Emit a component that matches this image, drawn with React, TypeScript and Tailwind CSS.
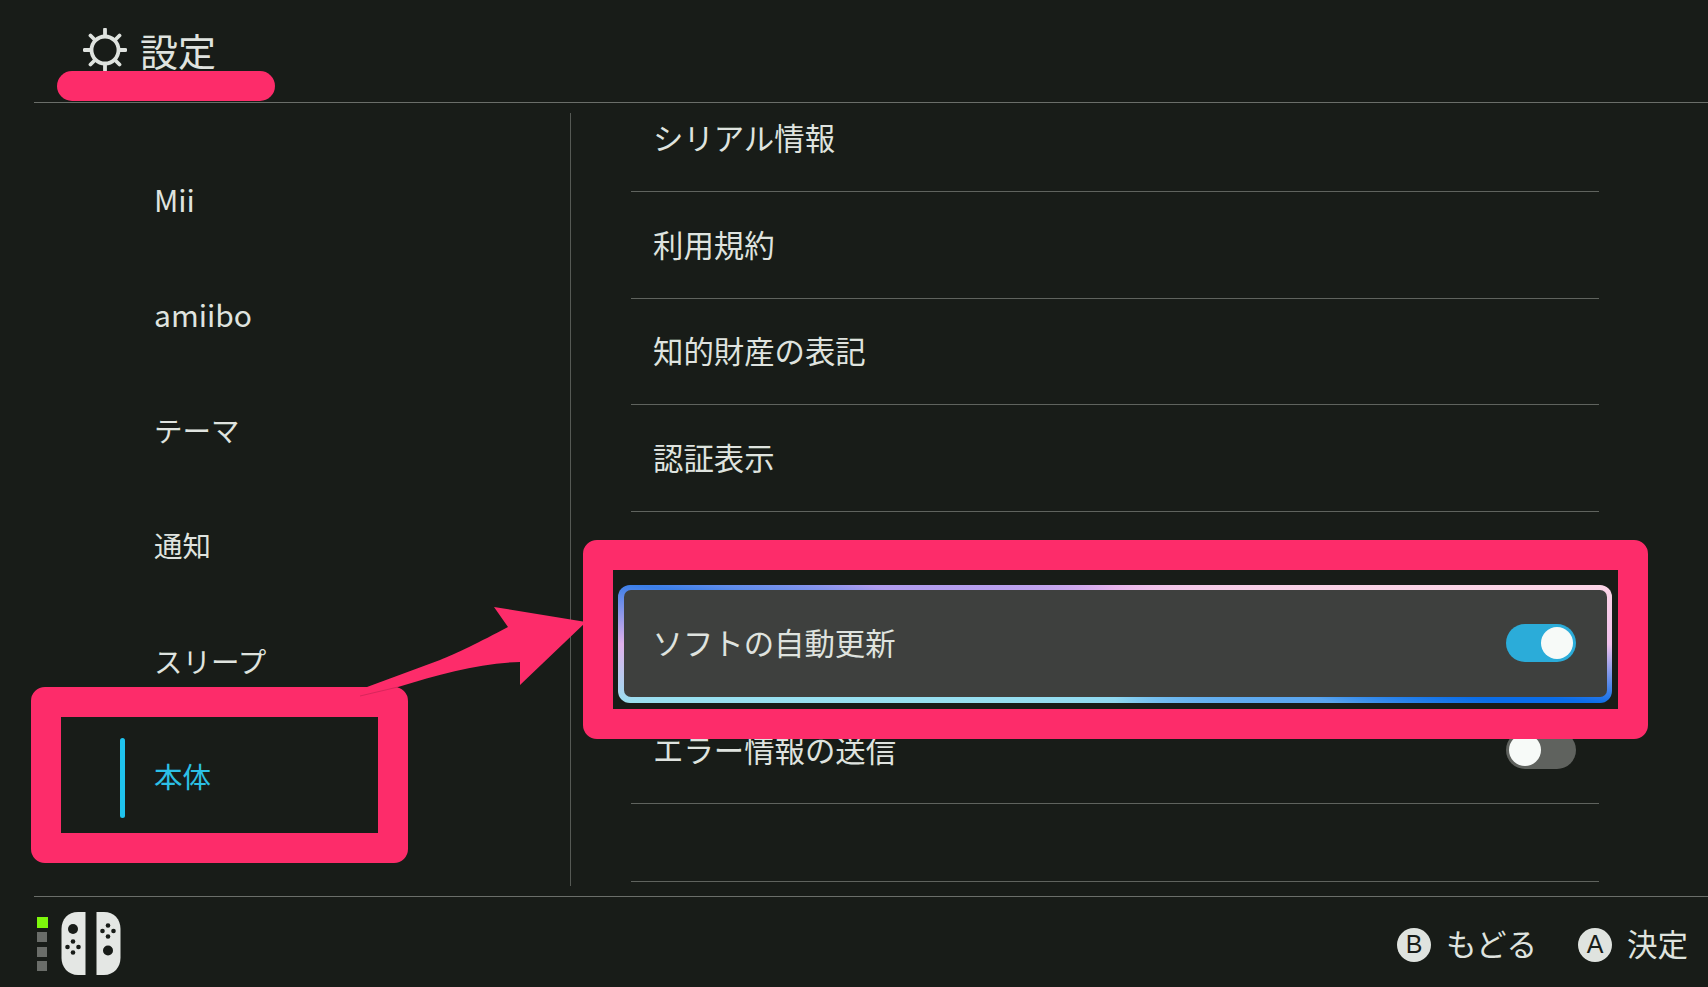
import React from 'react';

const sideItems = ['Mii', 'amiibo', 'テーマ', '通知', 'スリープ', '本体'];
const topRows = ['利用規約', '知的財産の表記', '認証表示'];

const Gear = () => (
  <svg width="44" height="44" viewBox="0 0 44 44" fill="none" stroke="#dfe3df" strokeWidth="3.800" strokeLinecap="round">
    <circle cx="22" cy="22" r="13.500" />
    <path d="M22 1.500V8M22 36V42.500M1.500 22H8M36 22H42.500M7.500 7.500L12 12M32 32L36.500 36.500M36.500 7.500L32 12M12 32L7.500 36.500" />
  </svg>
);

const JoyCons = () => (
  <svg width="60" height="64" viewBox="0 0 60 64">
    <path d="M24.500 0V63H17C7 63 0.500 55 0.500 46V17C0.500 7 7 0 17 0Z" fill="#e4e7e4" />
    <path d="M35.500 0V63H43C53 63 59.500 55 59.500 46V17C59.500 7 53 0 43 0Z" fill="#e4e7e4" />
    <g fill="#181c18">
      <circle cx="12" cy="17" r="5" />
      <circle cx="12" cy="29.500" r="2.300" />
      <circle cx="12" cy="40.500" r="2.300" />
      <circle cx="6.500" cy="35" r="2.300" />
      <circle cx="17.500" cy="35" r="2.300" />
      <circle cx="47" cy="38.500" r="5" />
      <circle cx="47" cy="13.500" r="2.300" />
      <circle cx="47" cy="24.500" r="2.300" />
      <circle cx="41.500" cy="19" r="2.300" />
      <circle cx="52.500" cy="19" r="2.300" />
    </g>
  </svg>
);

const Toggle = ({ on }: { on: boolean }) => (
  <div className={`flex h-[38px] w-[70px] items-center rounded-full px-[3px] ${on ? 'justify-end bg-[#2bacd9]' : 'justify-start bg-[#5f625e]'}`}>
    <div className="h-[32px] w-[32px] rounded-full bg-[#f7faf8]" />
  </div>
);

const ButtonHint = ({ letter, label }: { letter: string; label: string }) => (
  <div className="flex items-center gap-[15px]">
    <div className="flex h-[34px] w-[34px] items-center justify-center rounded-full bg-[#dfe3df] font-['Liberation_Sans',sans-serif] text-[25px] leading-none text-[#181c18]">
      {letter}
    </div>
    <span className="pb-[3px] text-[30.500px] leading-none">{label}</span>
  </div>
);

export default function App() {
  return (
    <div className="relative flex h-[987px] w-[1708px] flex-col overflow-hidden bg-[#181c18] font-['Noto_Sans_CJK_JP','Noto_Sans',sans-serif] text-[#dfe3df]">
      {/* header */}
      <header className="ml-[34px] flex h-[103px] shrink-0 items-center gap-[13px] border-b border-[#6a6e69] pb-[2px] pl-[49px]">
        <Gear />
        <h1 className="text-[38px] leading-none font-normal">設定</h1>
      </header>

      <main className="flex min-h-0 flex-1">
        {/* left menu */}
        <nav className="my-[10px] ml-[34px] w-[537px] shrink-0 border-r border-[#555954] pt-[30px]">
          {sideItems.map((item) => {
            const active = item === '本体';
            const latin = item === 'Mii' || item === 'amiibo';
            return (
              <div key={item} className="flex h-[115.400px] items-center pl-[86px]">
                <div className={`mr-[29px] h-[80px] w-[5px] rounded-sm ${active ? 'bg-[#1fc3ee]' : ''}`} />
                <span className={`leading-none ${latin ? 'pb-[4px] text-[30px]' : 'pb-[3px] text-[28.500px]'} ${active ? 'text-[#2cc0e6]' : ''}`}>{item}</span>
              </div>
            );
          })}
        </nav>

        {/* right list */}
        <section className="min-w-0 flex-1 pr-[109px] pl-[60px]">
          <div className="flex h-[89px] items-center border-b border-[#5f635e] pb-[20px] pl-[22px] text-[30.400px] leading-none">シリアル情報</div>
          {topRows.map((row) => (
            <div key={row} className="flex h-[106.600px] items-center border-b border-[#5f635e] pb-[2px] pl-[22px] text-[30.400px] leading-none">
              {row}
            </div>
          ))}
          <div className="h-[73px]" />
          <div className="-mx-[13px] rounded-[12px] bg-[conic-gradient(from_0deg,#e8b4ec_0deg,#fcd5e6_83deg,#f0c0ea_90deg,#0a6de8_97deg,#0a6de8_98.500deg,#5aa5ee_105deg,#8fd8f0_180deg,#98e0f0_263deg,#e0b0ea_270deg,#3b7fe8_277deg,#5f8cea_278.400deg,#b09cee_283.400deg,#e8b4ec_360deg)] p-[5.500px]">
            <div className="flex h-[107px] items-center justify-between rounded-[7px] bg-[#3e403e] pr-[31px] pb-[1px] pl-[29px]">
              <span className="pb-[3px] text-[30.400px] leading-none">ソフトの自動更新</span>
              <Toggle on />
            </div>
          </div>
          <div className="flex h-[101px] items-center justify-between border-b border-[#5f635e] pr-[23px] pb-[5px] pl-[22px]">
            <span className="pb-[3px] text-[30.400px] leading-none">エラー情報の送信</span>
            <Toggle on={false} />
          </div>
          <div className="h-[78px] border-b border-[#5f635e]" />
        </section>
      </main>

      {/* footer */}
      <footer className="ml-[34px] flex h-[91px] shrink-0 items-center justify-between border-t border-[#6a6e69] pr-[20px] pl-[3px]">
        <div className="flex items-center gap-[13px] pt-[4px]">
          <div className="flex flex-col gap-[4.500px]">
            <div className="h-[11px] w-[11px] bg-[#7ef70c]" />
            <div className="h-[10px] w-[10px] bg-[#6a6d69]" />
            <div className="h-[10px] w-[10px] bg-[#6a6d69]" />
            <div className="h-[10px] w-[10px] bg-[#6a6d69]" />
          </div>
          <JoyCons />
        </div>
        <div className="flex items-center gap-[41px] pt-[5px]">
          <ButtonHint letter="B" label="もどる" />
          <ButtonHint letter="A" label="決定" />
        </div>
      </footer>

      {/* pink annotations drawn over the screen */}
      <div className="absolute top-[71px] left-[57px] h-[30px] w-[218px] rounded-full bg-[#fd2c6a]" />
      <div className="absolute top-[687px] left-[31px] h-[176px] w-[377px] rounded-[14px] border-[30px] border-[#fd2c6a]" />
      <div className="absolute top-[540px] left-[583px] h-[199px] w-[1065px] rounded-[14px] border-[30px] border-[#fd2c6a]" />
      <svg className="absolute top-[590px] left-[340px]" width="260" height="120" viewBox="0 0 260 120">
        <path d="M246 32L154 17L168 37C140 52 115 64 100 70L27 97L20 106L58 97C100 84 140 73 180 72V95Z" fill="#fd2c6a" />
        <path d="M20 106L58 97" stroke="#d9265c" strokeWidth="1" fill="none" />
      </svg>
    </div>
  );
}
